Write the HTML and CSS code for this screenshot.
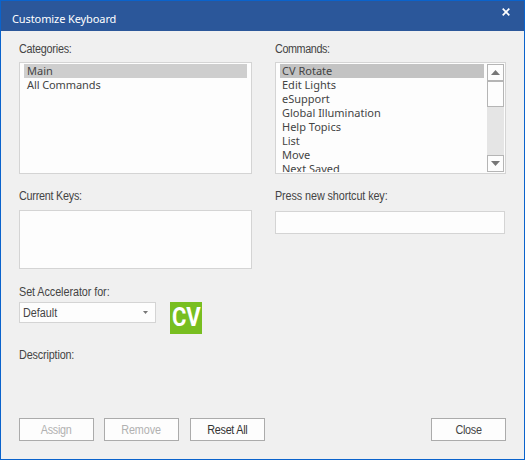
FILE: index.html
```html
<!DOCTYPE html>
<html lang="en">
<head>
<meta charset="utf-8">
<title>Customize Keyboard</title>
<link rel="stylesheet" href="styles.css">
</head>
<body>
<div class="dialog">
  <header class="titlebar">
    <h1 class="title">Customize Keyboard</h1>
    <svg class="close-icon" width="8" height="8" viewBox="0 0 8 8"><path d="M.7.7 7.3 7.3M7.3.7.7 7.3"/></svg>
  </header>
  <main class="content">
    <section class="columns lists">
      <div class="left">
        <div class="label categories-label">Categories:</div>
        <ul class="box list">
          <li class="selected">Main</li>
          <li class="all-commands">All Commands</li>
        </ul>
      </div>
      <div class="right">
        <div class="label commands-label">Commands:</div>
        <div class="box command-box">
          <ul class="list-items">
            <li class="selected">CV Rotate</li>
            <li>Edit Lights</li>
            <li>eSupport</li>
            <li>Global Illumination</li>
            <li>Help Topics</li>
            <li>List</li>
            <li>Move</li>
            <li>Next Saved</li>
          </ul>
          <div class="scrollbar">
            <div class="arrow"><svg width="9" height="5" viewBox="0 0 9 5"><path d="M4.5 0 9 5H0z"/></svg></div>
            <div class="thumb"></div>
            <div class="arrow down"><svg width="9" height="5" viewBox="0 0 9 5"><path d="M0 0h9L4.5 5z"/></svg></div>
          </div>
        </div>
      </div>
    </section>
    <section class="columns keys">
      <div class="left">
        <div class="label current-label">Current Keys:</div>
        <div class="box current"></div>
      </div>
      <div class="right">
        <div class="label press-label">Press new shortcut key:</div>
        <div class="box shortcut"></div>
      </div>
    </section>
    <section class="accelerator">
      <div class="label accel-label">Set Accelerator for:</div>
      <div class="accel-row">
        <div class="box combo"><span class="combo-text">Default</span><svg width="5" height="3" viewBox="0 0 5 3"><path d="M0 0h5L2.5 3z"/></svg></div>
        <div class="logo"><span>CV</span></div>
      </div>
    </section>
    <div class="label description">Description:</div>
    <footer class="buttons">
      <div class="button disabled assign"><span>Assign</span></div>
      <div class="button disabled remove"><span>Remove</span></div>
      <div class="button reset"><span>Reset All</span></div>
      <div class="button close"><span>Close</span></div>
    </footer>
  </main>
</div>
</body>
</html>
```
FILE: styles.css
```css
* { box-sizing: border-box; }
body { margin: 0; font-family: "Liberation Sans", Arial, sans-serif; font-size: 12px; color: #444; }
ul { margin: 0; padding: 0; list-style: none; }
.dialog { width: 525px; height: 460px; border: 1px solid #0a63cc; background: #f0f0f0; overflow: hidden; }
.titlebar { height: 30px; background: #2b579a; display: flex; justify-content: space-between; padding: 7px 14px 0 11px; }
.title { margin: 3px 0 0; font: 400 11px/15px "Noto Sans", sans-serif; letter-spacing: -.1px; color: #fff; }
.close-icon { fill: none; stroke: #fff; stroke-width: 1.7; }
.content { padding: 0 18px; }
.columns { display: grid; grid-template-columns: 233px 231px; column-gap: 23px; }
.lists { padding-top: 11px; }
.label { height: 20px; line-height: 14px; white-space: nowrap; transform: scaleX(.9); transform-origin: 0 0; }
.categories-label { letter-spacing: -.27px; }
.commands-label { letter-spacing: -.45px; }
.current-label { letter-spacing: -.27px; }
.press-label { letter-spacing: -.1px; }
.accel-label { letter-spacing: -.07px; }
.box { background: #fdfdfd; border: 1px solid #d4d4d4; }
.list, .command-box { height: 112px; }
.list, .list-items { font: 11px/14px "Noto Sans", sans-serif; letter-spacing: 0; }
.list { padding: 1px 4px; }
.list li, .list-items li { height: 14px; padding-left: 3px; white-space: nowrap; }
.list .all-commands { letter-spacing: -.1px; }
.list .selected { background: #cecece; }
.command-box { display: flex; justify-content: space-between; padding: 1px 1px 1px 4px; }
.list-items { width: 204px; height: 108px; overflow: hidden; }
.list-items li { padding-left: 2px; }
.list-items .selected { background: #c3c3c3; }
.scrollbar { width: 17px; height: 108px; background: #e5e5e5; display: flex; flex-direction: column; }
.arrow, .thumb { background: #fdfdfd; border: 1px solid #b5b5b5; }
.arrow { height: 17px; display: flex; align-items: center; justify-content: center; }
.arrow svg, .combo svg { fill: #777; }
.thumb { height: 26px; }
.down { margin-top: auto; }
.keys { padding-top: 15px; }
.keys .label { height: 21px; }
.current { height: 59px; }
.shortcut { width: 230px; height: 23px; margin-top: 1px; }
.accelerator { padding-top: 16px; }
.accelerator .label { height: 17px; }
.accel-row { display: flex; align-items: flex-start; gap: 14px; }
.combo { width: 137px; height: 21px; padding: 0 7px 0 3px; display: flex; justify-content: space-between; align-items: center; }
.combo-text { transform: scaleX(.9); transform-origin: 0 0; }
.logo { width: 32px; height: 32px; background: #78be20; display: flex; align-items: center; justify-content: center; font: 700 25px/32px Roboto, sans-serif; color: #fff; }
.logo span { transform: scaleX(.88); }
.description { margin-top: 14px; letter-spacing: -.17px; }
.buttons { margin-top: 50px; display: flex; }
.button { width: 75px; height: 23px; border: 1px solid #ababab; background: #fdfdfd; text-align: center; line-height: 22px; letter-spacing: -.3px; }
.button span { display: inline-block; transform: scaleX(.9); }
.disabled { color: #b1b1b1; }
.remove { margin-left: 10px; letter-spacing: -.1px; }
.reset { margin-left: 11px; color: #333; }
.close { margin-left: auto; }
```
